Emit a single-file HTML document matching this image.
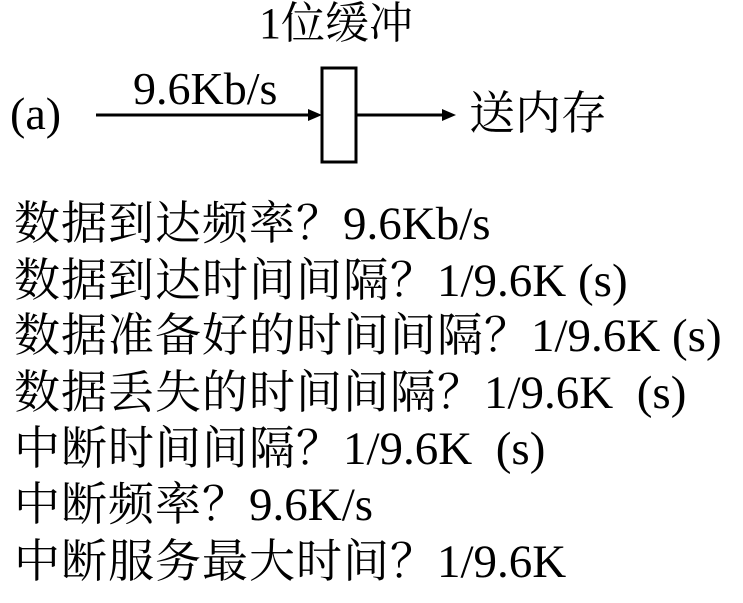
<!DOCTYPE html>
<html><head><meta charset="utf-8"><style>
body{margin:0;width:743px;height:603px;background:#fff;position:relative;overflow:hidden;font-family:"Liberation Serif","Noto Serif CJK SC",serif;color:#000}
.t{position:absolute;font-size:46px;line-height:46px;white-space:pre;letter-spacing:1px}
.t span{letter-spacing:0;font-size:47px}
</style></head><body>
<div class="t" style="left:259px;top:1px;font-size:44px;letter-spacing:0">1位缓冲</div>
<div class="t" style="left:133px;top:66px;font-size:46px;letter-spacing:0">9.6Kb/s</div>
<div class="t" style="left:10px;top:91px;letter-spacing:0">(a)</div>
<div class="t" style="left:469px;top:91px;font-size:46px;letter-spacing:0">送内存</div>
<svg style="position:absolute;left:0;top:0" width="743" height="200">
<line x1="96" y1="115" x2="312" y2="115" stroke="#000" stroke-width="3"/>
<polygon points="322,115 308,109 308,121" fill="#000"/>
<rect x="322" y="68" width="34" height="94" fill="none" stroke="#000" stroke-width="3"/>
<line x1="357" y1="115" x2="446" y2="115" stroke="#000" stroke-width="3"/>
<polygon points="456,115 442,109 442,121" fill="#000"/>
</svg>
<div class="t" style="left:14px;top:201px">数据到达频率？<span>9.6Kb/s</span></div>
<div class="t" style="left:14px;top:258px">数据到达时间间隔？<span>1/9.6K (s)</span></div>
<div class="t" style="left:14px;top:313px">数据准备好的时间间隔？<span>1/9.6K (s)</span></div>
<div class="t" style="left:14px;top:370px">数据丢失的时间间隔？<span>1/9.6K  (s)</span></div>
<div class="t" style="left:14px;top:426px">中断时间间隔？<span>1/9.6K  (s)</span></div>
<div class="t" style="left:14px;top:482px">中断频率？<span>9.6K/s</span></div>
<div class="t" style="left:14px;top:539px">中断服务最大时间？<span>1/9.6K</span></div>
</body></html>
